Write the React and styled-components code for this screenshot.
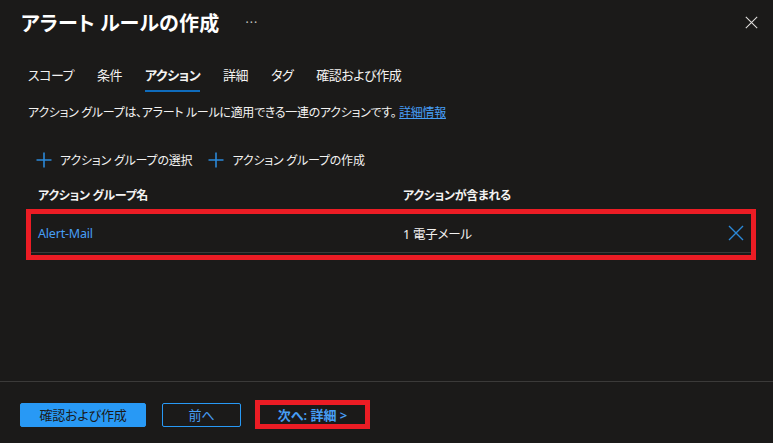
import React from 'react';
import styled, { createGlobalStyle } from 'styled-components';

const GlobalStyle = createGlobalStyle`
  html, body {
    margin: 0;
    padding: 0;
    background: #1b1a19;
  }
  body {
    font-family: "Noto Sans", "Noto Sans CJK JP", sans-serif;
    font-feature-settings: "palt";
    color: #f3f2f1;
  }
`;

const Blade = styled.div`
  width: 773px;
  height: 443px;
  display: flex;
  flex-direction: column;
  background: #1b1a19;
  overflow: hidden;
`;

const Header = styled.div`
  display: flex;
  align-items: center;
  height: 44px;
  padding: 0 10px 0 21px;
`;

const Title = styled.h1`
  margin: 0;
  font-size: 20px;
  font-weight: 600;
  color: #ffffff;
  letter-spacing: 0.2px;
`;

const More = styled.span`
  margin-left: 26px;
  font-size: 12px;
  color: #c8c6c4;
  letter-spacing: 1px;
`;

const CloseButton = styled.button`
  margin-left: auto;
  width: 24px;
  height: 24px;
  padding: 0;
  border: none;
  background: none;
  display: flex;
  align-items: center;
  justify-content: center;
`;

const Tabs = styled.div`
  display: flex;
  gap: 23px;
  padding: 14px 0 0 28px;
`;

const Tab = styled.div`
  height: 32px;
  display: flex;
  align-items: center;
  font-size: 13px;
  letter-spacing: -0.5px;
  font-weight: ${p => (p.$active ? 700 : 400)};
  color: #f3f2f1;
  border-bottom: 2px solid ${p => (p.$active ? '#0f6cbd' : 'transparent')};
`;

const Intro = styled.p`
  margin: 11px 0 0 28px;
  font-size: 12px;
  letter-spacing: -0.3px;
  line-height: 20px;
  color: #f3f2f1;
`;

const Link = styled.a`
  color: #479ef5;
  text-decoration: underline;
`;

const CommandBar = styled.div`
  display: flex;
  align-items: center;
  gap: 16px;
  height: 32px;
  margin-top: 21px;
  padding-left: 36px;
`;

const Command = styled.button`
  display: flex;
  align-items: center;
  gap: 8px;
  padding: 0;
  border: none;
  background: none;
  font: inherit;
  font-size: 12px;
  letter-spacing: -0.2px;
  color: #f3f2f1;
`;

const Table = styled.div`
  margin: 0 22px 0 31px;
`;

const HeaderRow = styled.div`
  display: grid;
  grid-template-columns: 365px 1fr;
  height: 38px;
  align-items: center;
  font-size: 12px;
  letter-spacing: -0.3px;
  font-weight: 700;
  color: #f3f2f1;
`;

const Cell = styled.div`
  padding-left: 7px;
  display: flex;
  align-items: center;
`;

const Highlight = styled.div`
  outline: 5px solid #ec1c24;
  padding-bottom: 2px;
`;

const Row = styled.div`
  display: grid;
  grid-template-columns: 365px 1fr 40px;
  height: 38px;
  align-items: center;
  border-bottom: 1px solid #3b3a39;
  font-size: 12.5px;
  letter-spacing: -0.2px;
`;

const NameLink = styled.a`
  color: #479ef5;
  text-decoration: none;
`;

const RemoveButton = styled.button`
  justify-self: end;
  margin-right: 5px;
  width: 20px;
  height: 20px;
  padding: 0;
  border: none;
  background: none;
  display: flex;
  align-items: center;
  justify-content: center;
`;

const Footer = styled.div`
  margin-top: auto;
  height: 62px;
  border-top: 1px solid #3b3a39;
  display: flex;
  align-items: center;
  padding: 4px 0 0 20px;
  box-sizing: border-box;
`;

const Button = styled.button`
  height: 24px;
  width: ${p => p.$width}px;
  margin-right: ${p => p.$gap || 0}px;
  padding: 0;
  border-radius: 2px;
  font: inherit;
  font-size: 13px;
  letter-spacing: -0.2px;
  border: 1px solid #2899f5;
  background: ${p => (p.$primary ? '#2899f5' : 'transparent')};
  color: ${p => (p.$primary ? '#1b1a19' : '#479ef5')};
`;

const NextButton = styled.button`
  height: 29px;
  width: 115px;
  padding: 0;
  border: 5px solid #ec1c24;
  background: transparent;
  font: inherit;
  font-size: 13px;
  font-weight: 600;
  color: #479ef5;
`;

const Cross = ({ size, color, width }) => (
  <svg width={size} height={size} viewBox="0 0 16 16">
    <path d="M1 1 L15 15 M15 1 L1 15" stroke={color} strokeWidth={width} fill="none" />
  </svg>
);

const Plus = () => (
  <svg width="16" height="16" viewBox="0 0 16 16">
    <path d="M8 0.5 V15.5 M0.5 8 H15.5" stroke="#2b88d8" strokeWidth="1.6" fill="none" />
  </svg>
);

const tabs = ['スコープ', '条件', 'アクション', '詳細', 'タグ', '確認および作成'];

const App = () => {
  return (
    <Blade>
      <GlobalStyle />
      <Header>
        <Title>アラート ルールの作成</Title>
        <More>···</More>
        <CloseButton>
          <Cross size={13} color="#e1dfdd" width={1.3} />
        </CloseButton>
      </Header>

      <Tabs>
        {tabs.map(t => (
          <Tab key={t} $active={t === 'アクション'}>{t}</Tab>
        ))}
      </Tabs>

      <Intro>
        アクション グループは、アラート ルールに適用できる一連のアクションです。 <Link href="#">詳細情報</Link>
      </Intro>

      <CommandBar>
        <Command><Plus />アクション グループの選択</Command>
        <Command><Plus />アクション グループの作成</Command>
      </CommandBar>

      <Table>
        <HeaderRow>
          <Cell>アクション グループ名</Cell>
          <Cell>アクションが含まれる</Cell>
        </HeaderRow>
        <Highlight>
          <Row>
            <Cell><NameLink href="#">Alert-Mail</NameLink></Cell>
            <Cell>1 電子メール</Cell>
            <RemoveButton>
              <Cross size={16} color="#2b88d8" width={1.4} />
            </RemoveButton>
          </Row>
        </Highlight>
      </Table>

      <Footer>
        <Button $primary $width={126} $gap={16}>確認および作成</Button>
        <Button $width={79} $gap={14}>前へ</Button>
        <NextButton>次へ: 詳細 &gt;</NextButton>
      </Footer>
    </Blade>
  );
};

export default App;
